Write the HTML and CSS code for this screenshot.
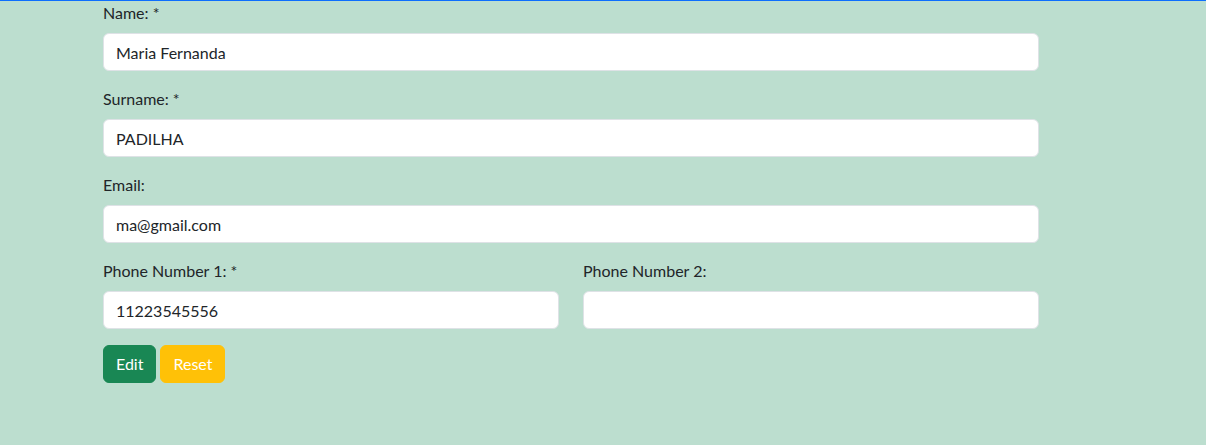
FILE: index.html
```html
<!DOCTYPE html>
<html lang="en">
<head>
<meta charset="utf-8">
<title>Edit contact</title>
<link rel="stylesheet" href="styles.css">
</head>
<body>
<div class="page">
  <form class="contact-form">
    <div class="field">
      <label class="form-label" for="name">Name: *</label>
      <input class="form-control" id="name" type="text" value="Maria Fernanda">
    </div>
    <div class="field">
      <label class="form-label" for="surname">Surname: *</label>
      <input class="form-control" id="surname" type="text" value="PADILHA">
    </div>
    <div class="field">
      <label class="form-label" for="email">Email:</label>
      <input class="form-control" id="email" type="text" value="ma@gmail.com">
    </div>
    <div class="row">
      <div class="field">
        <label class="form-label" for="phone1">Phone Number 1: *</label>
        <input class="form-control" id="phone1" type="text" value="11223545556">
      </div>
      <div class="field">
        <label class="form-label" for="phone2">Phone Number 2:</label>
        <input class="form-control" id="phone2" type="text" value="">
      </div>
    </div>
    <div class="actions">
      <button type="button" class="btn btn-success">Edit</button>
      <button type="reset" class="btn btn-warning">Reset</button>
    </div>
  </form>
</div>
</body>
</html>
```

FILE: styles.css
```css
html, body {
  margin: 0;
  padding: 0;
}
body {
  background: #bcdecf;
  border-top: 1px solid #0d6efd;
  font-family: "Lato", "Open Sans", sans-serif;
  font-size: 16px;
  line-height: 24px;
  color: #212529;
  min-height: 444px;
}
.page {
  padding-left: 103px;
}
.contact-form {
  width: 936px;
}
.field {
  margin-bottom: 16px;
}
.form-label {
  display: block;
  margin-bottom: 8px;
}
.form-control {
  display: block;
  box-sizing: border-box;
  width: 100%;
  height: 38px;
  padding: 6px 12px;
  font: inherit;
  color: #212529;
  background: #fff;
  border: 1px solid #dee2e6;
  border-radius: 6px;
  outline: none;
}
.row {
  display: grid;
  grid-template-columns: 1fr 1fr;
  column-gap: 24px;
}
.actions {
  display: flex;
  gap: 4px;
}
.btn {
  height: 38px;
  padding: 6px 12px;
  font: inherit;
  color: #fff;
  border: 1px solid transparent;
  border-radius: 6px;
  cursor: pointer;
}
.btn-success {
  background: #198754;
  border-color: #198754;
}
.btn-warning {
  background: #ffc107;
  border-color: #ffc107;
}
```
